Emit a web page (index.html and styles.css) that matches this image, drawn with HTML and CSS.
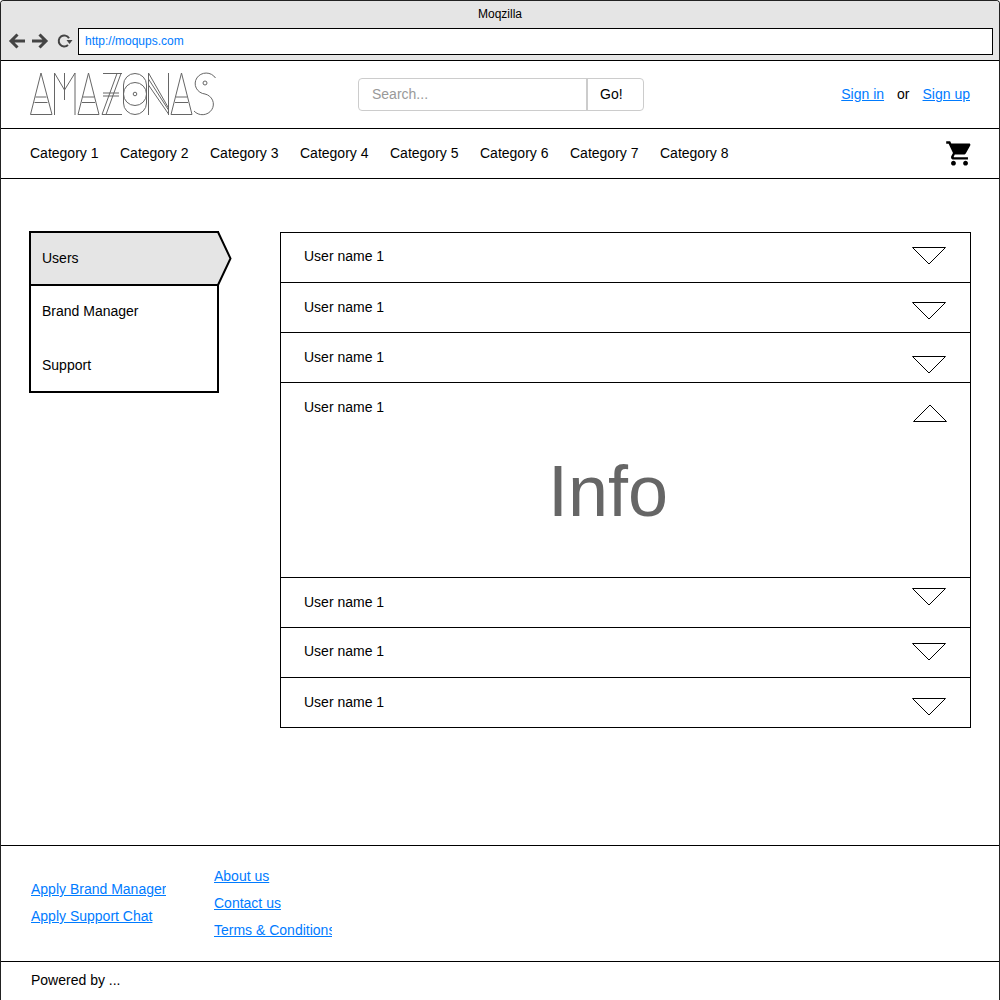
FILE: index.html
```html
<!DOCTYPE html>
<html lang="en">
<head>
<meta charset="utf-8">
<title>Amazonas</title>
<link rel="stylesheet" href="styles.css">
</head>
<body>
<div class="frame">
  <div class="chrome">
    <div class="chrome-title">Moqzilla</div>
    <div class="chrome-bar">
      <svg class="nav-icons" width="66" height="20" viewBox="0 0 66 20" aria-hidden="true">
        <path class="nav-stroke" d="M17 10H3M9.500 3.500L3 10l6.500 6.500"/>
        <path class="nav-stroke" d="M24 10h14M31.500 3.500L38 10l-6.500 6.500"/>
        <path class="nav-thin" d="M61 7.200A5.500 5.500 0 1 0 60 14"/>
        <path class="nav-fill" d="M58.500 9h6l-3 4z"/>
      </svg>
      <div class="url">http://moqups.com</div>
    </div>
  </div>

  <header class="header">
    <svg class="logo" width="186" height="44" viewBox="30 72 186 44" role="img" aria-label="Amazonas logo">
      <g class="logo-lines">
        <path d="M30.500 114.500L41 73l11 41.500zM35.500 97h11M34.500 102.500h13"/>
        <path d="M54.500 115V73L64.500 90 75 73v42M64.500 73v27"/>
        <path d="M78 114.500L88.500 73 99 114.500zM83 97h11M82 102.500h13"/>
        <path d="M103 73.500h19M102 114.500h20M117 73.500L102 114.500M121 73.500L106 114.500M103 93h16M103 96h16"/>
        <rect x="123.500" y="73.500" width="23" height="41" rx="11.500"/>
        <circle cx="135" cy="94" r="11.500"/>
        <circle cx="135" cy="94" r="1.800"/>
        <path d="M148.500 73v42M168.500 73v42M148.500 73l20 35M148.500 79l20 31M148.500 85l20 29"/>
        <path d="M171 114.500L181.500 73 192 114.500zM176 97h11M175 102.500h13"/>
        <path d="M215.500 78A11 10.500 0 1 0 205 94A11 10.500 0 1 1 194 111"/>
        <circle cx="205" cy="83" r="2"/>
      </g>
    </svg>
    <form class="search">
      <div class="search-input">Search...</div>
      <div class="search-go">Go!</div>
    </form>
    <div class="auth">
      <a class="link" href="#">Sign in</a>
      <span class="auth-or">or</span>
      <a class="link" href="#">Sign up</a>
    </div>
  </header>

  <nav class="nav">
    <a class="nav-item" href="#">Category 1</a>
    <a class="nav-item" href="#">Category 2</a>
    <a class="nav-item" href="#">Category 3</a>
    <a class="nav-item" href="#">Category 4</a>
    <a class="nav-item" href="#">Category 5</a>
    <a class="nav-item" href="#">Category 6</a>
    <a class="nav-item" href="#">Category 7</a>
    <a class="nav-item" href="#">Category 8</a>
    <svg class="cart" width="29" height="29" viewBox="0 0 24 24" aria-label="Cart" role="img">
      <path d="M7 18c-1.100 0-1.990.9-1.990 2S5.900 22 7 22s2-.9 2-2-.9-2-2-2zM1 2v2h2l3.600 7.590-1.350 2.450c-.16.28-.25.61-.25.96 0 1.100.9 2 2 2h12v-2H7.420c-.14 0-.25-.11-.25-.25l.03-.12.9-1.830h7.450c.75 0 1.410-.41 1.750-1.030l3.580-6.490c.08-.14.12-.31.12-.48 0-.55-.45-1-1-1H5.210l-.94-2H1zm16 16c-1.100 0-1.990.9-1.990 2s.89 2 1.990 2 2-.9 2-2-.9-2-2-2z"/>
    </svg>
  </nav>

  <main class="main">
    <aside class="side">
      <div class="side-item side-active">Users
        <svg class="side-tip" width="16" height="55" viewBox="0 0 16 55" aria-hidden="true">
          <path class="tip-fill" d="M0 2h1.500L13 27.500 1.500 53H0z"/>
          <path class="tip-line" d="M1 1l12.500 26.500L1 54"/>
        </svg>
      </div>
      <div class="side-item side-second">Brand Manager</div>
      <div class="side-item side-third">Support</div>
    </aside>

    <section class="list">
      <div class="row">
        <span class="row-name t23">User name 1</span>
        <svg class="arrow a14" width="34" height="18" viewBox="0 0 34 18" aria-hidden="true"><path d="M.5.5h33L17 17z"/></svg>
      </div>
      <div class="row">
        <span class="row-name t24">User name 1</span>
        <svg class="arrow a19" width="34" height="18" viewBox="0 0 34 18" aria-hidden="true"><path d="M.5.5h33L17 17z"/></svg>
      </div>
      <div class="row">
        <span class="row-name t24">User name 1</span>
        <svg class="arrow a23" width="34" height="18" viewBox="0 0 34 18" aria-hidden="true"><path d="M.5.5h33L17 17z"/></svg>
      </div>
      <div class="row row-open">
        <div class="row-head">
          <span class="row-name t24">User name 1</span>
          <svg class="arrow a21 arrow-up" width="34" height="18" viewBox="0 0 34 18" aria-hidden="true"><path d="M.5 17.500h33L17 1z"/></svg>
        </div>
        <div class="info">Info</div>
      </div>
      <div class="row">
        <span class="row-name t24">User name 1</span>
        <svg class="arrow a10" width="34" height="18" viewBox="0 0 34 18" aria-hidden="true"><path d="M.5.5h33L17 17z"/></svg>
      </div>
      <div class="row">
        <span class="row-name t23">User name 1</span>
        <svg class="arrow a15" width="34" height="18" viewBox="0 0 34 18" aria-hidden="true"><path d="M.5.5h33L17 17z"/></svg>
      </div>
      <div class="row">
        <span class="row-name t24">User name 1</span>
        <svg class="arrow a20" width="34" height="18" viewBox="0 0 34 18" aria-hidden="true"><path d="M.5.5h33L17 17z"/></svg>
      </div>
    </section>
  </main>

  <footer class="footer">
    <div class="foot-col foot-col-a">
      <a class="link" href="#">Apply Brand Manager</a>
      <a class="link" href="#">Apply Support Chat</a>
    </div>
    <div class="foot-col foot-col-b">
      <a class="link" href="#">About us</a>
      <a class="link" href="#">Contact us</a>
      <a class="link" href="#">Terms &amp; Conditions</a>
    </div>
  </footer>
  <div class="powered">Powered by ...</div>
</div>
</body>
</html>
```

FILE: styles.css
```css
* { box-sizing: border-box; }
html, body { margin: 0; padding: 0; }
body {
  font-family: "Liberation Sans", Arial, sans-serif;
  font-size: 14px;
  line-height: 16px;
  color: #000;
  background: #fff;
}
.frame {
  width: 1000px;
  height: 1000px;
  border: 1px solid #222;
  border-bottom: 0;
  border-radius: 4px 4px 0 0;
  overflow: hidden;
  display: flex;
  flex-direction: column;
}

/* browser chrome */
.chrome {
  height: 60px;
  background: #e5e5e5;
  border-bottom: 1px solid #000;
  flex: none;
}
.chrome-title {
  height: 27px;
  padding-top: 6px;
  font-size: 12px;
  line-height: 14px;
  text-align: center;
}
.chrome-bar {
  display: flex;
  align-items: center;
  padding-left: 7px;
}
.nav-icons { flex: none; margin: -1px 4px 0 0; }
.nav-stroke { fill: none; stroke: #444; stroke-width: 3; }
.nav-thin { fill: none; stroke: #444; stroke-width: 2; }
.nav-fill { fill: #444; }
.url {
  width: 915px;
  height: 27px;
  background: #fff;
  border: 1px solid #000;
  padding-left: 6px;
  font-size: 12px;
  line-height: 25px;
  color: #007bff;
}

/* header */
.header {
  height: 68px;
  flex: none;
  border-bottom: 1px solid #000;
  display: flex;
  align-items: flex-start;
  padding: 11px 29px 0 29px;
}
.logo { flex: none; }
.logo-lines { fill: none; stroke: #666; stroke-width: 1; }
.search {
  display: flex;
  margin: 6px 0 0 142px;
  width: 286px;
  height: 33px;
  border: 1px solid #ccc;
  border-radius: 4px;
  flex: none;
}
.search-input {
  width: 229px;
  padding-left: 13px;
  line-height: 30px;
  color: #999;
  border-right: 2px solid #ccc;
}
.search-go {
  flex: 1;
  padding-left: 12px;
  line-height: 30px;
}
.auth {
  margin-left: auto;
  margin-top: 14px;
  display: flex;
  gap: 13px;
}
.link { color: #007bff; text-decoration: underline; }

/* category nav */
.nav {
  height: 50px;
  flex: none;
  border-bottom: 1px solid #000;
  display: flex;
  align-items: flex-start;
  padding-left: 29px;
  padding-right: 25px;
}
.nav-item {
  width: 90px;
  margin-top: 16px;
  color: #000;
  text-decoration: none;
}
.cart { margin-left: auto; margin-top: 10px; fill: #000; }

/* main */
.main {
  height: 666px;
  flex: none;
  display: flex;
  align-items: flex-start;
  padding: 52px 0 0 28px;
  gap: 61px;
}
.side {
  width: 190px;
  height: 162px;
  border: 2px solid #000;
  flex: none;
}
.side-item {
  height: 53px;
  padding: 17px 0 0 11px;
}
.side-active {
  position: relative;
  background: #e5e5e5;
  border-bottom: 2px solid #000;
}
.side-third { padding-top: 18px; }
.side-tip { position: absolute; top: -2px; right: -16px; }
.tip-fill { fill: #e5e5e5; }
.tip-line { fill: none; stroke: #000; stroke-width: 2; }

.list {
  width: 691px;
  margin-top: 1px;
  border: 1px solid #000;
  border-bottom: 0;
  flex: none;
}
.row {
  height: 50px;
  border-bottom: 1px solid #000;
  display: flex;
  justify-content: space-between;
  align-items: flex-start;
  padding: 0 24px 0 23px;
}
.row-open {
  height: 195px;
  display: block;
}
.row-head {
  display: flex;
  justify-content: space-between;
  align-items: flex-start;
  height: 50px;
}
.row-name { display: block; }
.t23 { margin-top: 15px; }
.t24 { margin-top: 16px; }
.arrow { display: block; flex: none; fill: #fff; stroke: #000; stroke-width: 1; }
.arrow-up { position: relative; left: 1px; }
.a10 { margin-top: 10px; }
.a14 { margin-top: 14px; }
.a15 { margin-top: 15px; }
.a19 { margin-top: 19px; }
.a20 { margin-top: 20px; }
.a21 { margin-top: 21px; }
.a23 { margin-top: 23px; }
.info {
  height: 82px;
  margin-top: 17px;
  padding-right: 34px;
  text-align: center;
  font-size: 72px;
  line-height: 82px;
  color: #666;
}

/* footer */
.footer {
  height: 117px;
  flex: none;
  border-top: 1px solid #000;
  border-bottom: 1px solid #000;
  display: flex;
  align-items: center;
  padding: 0 0 2px 30px;
}
.foot-col {
  display: flex;
  flex-direction: column;
  gap: 11px;
  overflow: hidden;
  white-space: nowrap;
  flex: none;
}
.foot-col-a { width: 135px; margin-right: 48px; }
.foot-col-b { width: 118px; }
.powered {
  flex: 1;
  padding: 10px 0 0 30px;
}
```
